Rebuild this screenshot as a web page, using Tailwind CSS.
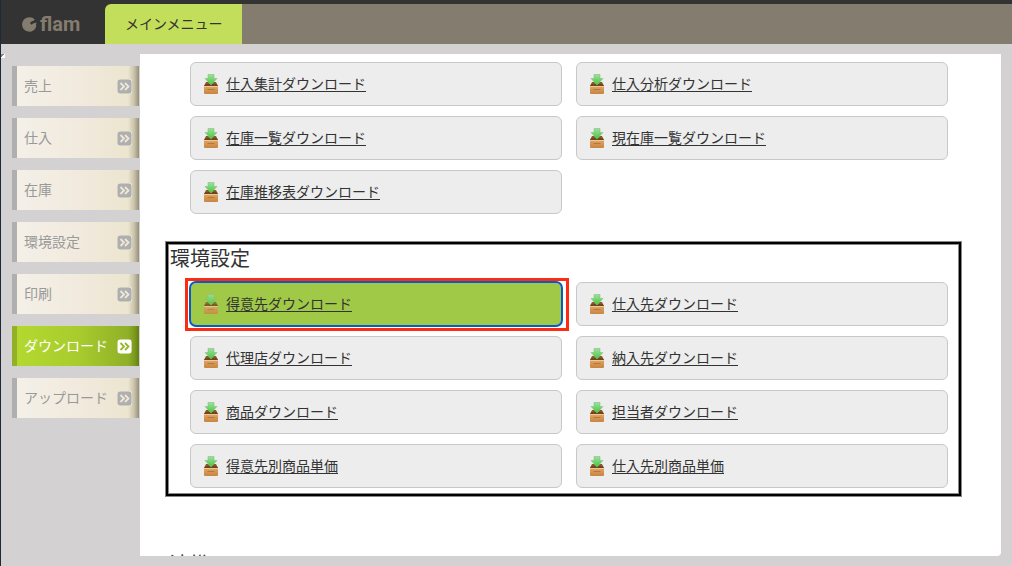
<!DOCTYPE html>
<html lang="ja">
<head>
    <meta charset="UTF-8">
    <meta name="viewport" content="width=device-width, initial-scale=1.0">
    <title>flam - ダウンロード</title>
    <script src="https://cdn.jsdelivr.net/npm/@tailwindcss/browser@4"></script>
</head>
<body class="h-screen flex flex-col overflow-hidden bg-[#d3d1d2] border-l border-[#1e2a3a] text-[#333] font-['Liberation_Sans','Noto_Sans_CJK_JP',sans-serif]">

    <!--Ikoner-->
    <svg class="absolute w-0 h-0">
        <defs>
            <linearGradient id="boxFront" x1="0" y1="0" x2="0" y2="1">
                <stop offset="0" stop-color="#dfa566"/>
                <stop offset="1" stop-color="#c98440"/>
            </linearGradient>
            <linearGradient id="arrowFill" x1="0" y1="0" x2="0" y2="1">
                <stop offset="0" stop-color="#a5dba5"/>
                <stop offset="1" stop-color="#3ecb35"/>
            </linearGradient>
            <symbol id="download" viewBox="0 0 16 20">
                <path d="M3 8h10l2 4H1z" fill="#8a5a2c"/>
                <path d="M2.500 10h11l1.500 2H1z" fill="#6e4520"/>
                <rect x="1" y="12" width="14" height="8" rx="1" fill="url(#boxFront)"/>
                <path d="M1 12.500h14" stroke="#efc893"/>
                <path d="M4.500 15.500h7" stroke="#b5783b"/>
                <path d="M5 .5h6v4h3L8 11 2 4.500h3z" fill="url(#arrowFill)" stroke="#79c779" stroke-width=".6"/>
            </symbol>
            <symbol id="next" viewBox="0 0 15 15">
                <rect width="15" height="15" rx="3" fill="currentColor"/>
                <path d="M3.500 4l3.500 3.500L3.500 11M8 4l3.500 3.500L8 11" fill="none" stroke-width="1.800"/>
            </symbol>
        </defs>
    </svg>

    <!--Header-->
    <header class="flex h-11 shrink-0 bg-[#857c70] border-t-4 border-[#333]">
        <a href="#" class="w-[104px] -mt-1 pt-1 pl-[21px] flex items-center gap-[3px] bg-[#333] text-[#857c70]">
            <svg class="w-[15px] h-[15px]" viewBox="0 0 15 15" fill="currentColor">
                <path d="M7.500.3C9.600.3 11.300 1 12.600 2.300L12 3.500 8.500 5l-.3 1.500 1.400 1.200L11 6.500 14.700 5.500l-.7 2L14.300 9A7.200 7.200 0 1 1 7.500.3z"/>
            </svg>
            <span class="text-xl leading-none font-bold font-['Roboto',sans-serif]">flam</span>
        </a>
        <nav class="flex bg-[#333]">
            <a href="#" class="pl-5 pr-[19px] flex items-center rounded-tl-md bg-[#c3de5a] text-sm">メインメニュー</a>
        </nav>
    </header>

    <main class="relative flex flex-1 min-h-0 pt-2.5 pb-2.5 pr-[11px] pl-[11px]">
        <div class="absolute left-0 top-2.5 w-1 h-1 bg-linear-to-br from-[#888] from-50% to-white to-50%"></div>

        <!--Sidemeny-->
        <nav class="w-[128px] pt-3 shrink-0">
            <ul class="flex flex-col gap-3 text-sm">
                <li><a href="#" class="flex items-center justify-between h-10 mr-px pl-[7px] pr-[7px] border-l-5 border-[#afafb0] bg-[linear-gradient(to_right,#f4f0e8,#f1e9dc_55%,#ece5cf_91%,#c9c3ac_96%,#969079)] text-[#999]">売上<svg class="w-[15px] h-[15px] text-[#afafb0] stroke-[#eee8d8]"><use href="#next"/></svg></a></li>
                <li><a href="#" class="flex items-center justify-between h-10 mr-px pl-[7px] pr-[7px] border-l-5 border-[#afafb0] bg-[linear-gradient(to_right,#f4f0e8,#f1e9dc_55%,#ece5cf_91%,#c9c3ac_96%,#969079)] text-[#999]">仕入<svg class="w-[15px] h-[15px] text-[#afafb0] stroke-[#eee8d8]"><use href="#next"/></svg></a></li>
                <li><a href="#" class="flex items-center justify-between h-10 mr-px pl-[7px] pr-[7px] border-l-5 border-[#afafb0] bg-[linear-gradient(to_right,#f4f0e8,#f1e9dc_55%,#ece5cf_91%,#c9c3ac_96%,#969079)] text-[#999]">在庫<svg class="w-[15px] h-[15px] text-[#afafb0] stroke-[#eee8d8]"><use href="#next"/></svg></a></li>
                <li><a href="#" class="flex items-center justify-between h-10 mr-px pl-[7px] pr-[7px] border-l-5 border-[#afafb0] bg-[linear-gradient(to_right,#f4f0e8,#f1e9dc_55%,#ece5cf_91%,#c9c3ac_96%,#969079)] text-[#999]">環境設定<svg class="w-[15px] h-[15px] text-[#afafb0] stroke-[#eee8d8]"><use href="#next"/></svg></a></li>
                <li><a href="#" class="flex items-center justify-between h-10 mr-px pl-[7px] pr-[7px] border-l-5 border-[#afafb0] bg-[linear-gradient(to_right,#f4f0e8,#f1e9dc_55%,#ece5cf_91%,#c9c3ac_96%,#969079)] text-[#999]">印刷<svg class="w-[15px] h-[15px] text-[#afafb0] stroke-[#eee8d8]"><use href="#next"/></svg></a></li>
                <li><a href="#" class="flex items-center justify-between h-10 mr-px pl-[7px] pr-[7px] border-l-5 border-[#94b02a] bg-[linear-gradient(to_right,#b3d930,#a8cc2d_50%,#8fb028_91%,#7d9c20_96%,#648014)] text-white">ダウンロード<svg class="w-[15px] h-[15px] text-white stroke-[#94b82a]"><use href="#next"/></svg></a></li>
                <li><a href="#" class="flex items-center justify-between h-10 mr-px pl-[7px] pr-[7px] border-l-5 border-[#afafb0] bg-[linear-gradient(to_right,#f4f0e8,#f1e9dc_55%,#ece5cf_91%,#c9c3ac_96%,#969079)] text-[#999]">アップロード<svg class="w-[15px] h-[15px] text-[#afafb0] stroke-[#eee8d8]"><use href="#next"/></svg></a></li>
            </ul>
        </nav>

        <!--Hovedinnhold-->
        <div class="flex-1 overflow-hidden bg-white rounded-br-sm">
            <section class="pt-2 pl-[50px] pr-[53px]">
                <ul class="grid grid-cols-2 gap-x-3.5 gap-y-2.5 text-sm">
                    <li class="flex items-center h-11 pl-3 gap-[7px] bg-[#ededed] border border-[#c8c8c8] rounded-md"><svg class="w-4 h-5"><use href="#download"/></svg><a href="#" class="underline underline-offset-2">仕入集計ダウンロード</a></li>
                    <li class="flex items-center h-11 pl-3 gap-[7px] bg-[#ededed] border border-[#c8c8c8] rounded-md"><svg class="w-4 h-5"><use href="#download"/></svg><a href="#" class="underline underline-offset-2">仕入分析ダウンロード</a></li>
                    <li class="flex items-center h-11 pl-3 gap-[7px] bg-[#ededed] border border-[#c8c8c8] rounded-md"><svg class="w-4 h-5"><use href="#download"/></svg><a href="#" class="underline underline-offset-2">在庫一覧ダウンロード</a></li>
                    <li class="flex items-center h-11 pl-3 gap-[7px] bg-[#ededed] border border-[#c8c8c8] rounded-md"><svg class="w-4 h-5"><use href="#download"/></svg><a href="#" class="underline underline-offset-2">現在庫一覧ダウンロード</a></li>
                    <li class="flex items-center h-11 pl-3 gap-[7px] bg-[#ededed] border border-[#c8c8c8] rounded-md"><svg class="w-4 h-5"><use href="#download"/></svg><a href="#" class="underline underline-offset-2">在庫推移表ダウンロード</a></li>
                </ul>
            </section>

            <section class="mt-7 ml-[26px] mr-10 pb-1.5 border-2 border-black ring-1 ring-[#888] inset-ring-1 inset-ring-[#888]">
                <h2 class="pl-0.5 mb-2 text-xl leading-[30px]">環境設定</h2>
                <ul class="grid grid-cols-2 gap-x-3.5 gap-y-2.5 pl-[22px] pr-[11px] text-sm">
                    <li class="relative flex items-center h-11 pl-3 gap-[7px] bg-[#a1c948] border border-[#c8c8c8] rounded-md outline-2 -outline-offset-1 outline-[#0a5bc8]">
                        <svg class="w-4 h-5 opacity-80"><use href="#download"/></svg><a href="#" class="underline underline-offset-2">得意先ダウンロード</a>
                        <span class="absolute -left-[6px] -right-2 -top-[5px] -bottom-1.5 border-3 border-[#fb2c12]"></span>
                    </li>
                    <li class="flex items-center h-11 pl-3 gap-[7px] bg-[#ededed] border border-[#c8c8c8] rounded-md"><svg class="w-4 h-5"><use href="#download"/></svg><a href="#" class="underline underline-offset-2">仕入先ダウンロード</a></li>
                    <li class="flex items-center h-11 pl-3 gap-[7px] bg-[#ededed] border border-[#c8c8c8] rounded-md"><svg class="w-4 h-5"><use href="#download"/></svg><a href="#" class="underline underline-offset-2">代理店ダウンロード</a></li>
                    <li class="flex items-center h-11 pl-3 gap-[7px] bg-[#ededed] border border-[#c8c8c8] rounded-md"><svg class="w-4 h-5"><use href="#download"/></svg><a href="#" class="underline underline-offset-2">納入先ダウンロード</a></li>
                    <li class="flex items-center h-11 pl-3 gap-[7px] bg-[#ededed] border border-[#c8c8c8] rounded-md"><svg class="w-4 h-5"><use href="#download"/></svg><a href="#" class="underline underline-offset-2">商品ダウンロード</a></li>
                    <li class="flex items-center h-11 pl-3 gap-[7px] bg-[#ededed] border border-[#c8c8c8] rounded-md"><svg class="w-4 h-5"><use href="#download"/></svg><a href="#" class="underline underline-offset-2">担当者ダウンロード</a></li>
                    <li class="flex items-center h-11 pl-3 gap-[7px] bg-[#ededed] border border-[#c8c8c8] rounded-md"><svg class="w-4 h-5"><use href="#download"/></svg><a href="#" class="underline underline-offset-2">得意先別商品単価</a></li>
                    <li class="flex items-center h-11 pl-3 gap-[7px] bg-[#ededed] border border-[#c8c8c8] rounded-md"><svg class="w-4 h-5"><use href="#download"/></svg><a href="#" class="underline underline-offset-2">仕入先別商品単価</a></li>
                </ul>
            </section>

            <section class="mt-[54px] pl-[30px]">
                <h2 class="text-xl leading-[30px]">連携</h2>
            </section>
        </div>
    </main>
</body>
</html>
